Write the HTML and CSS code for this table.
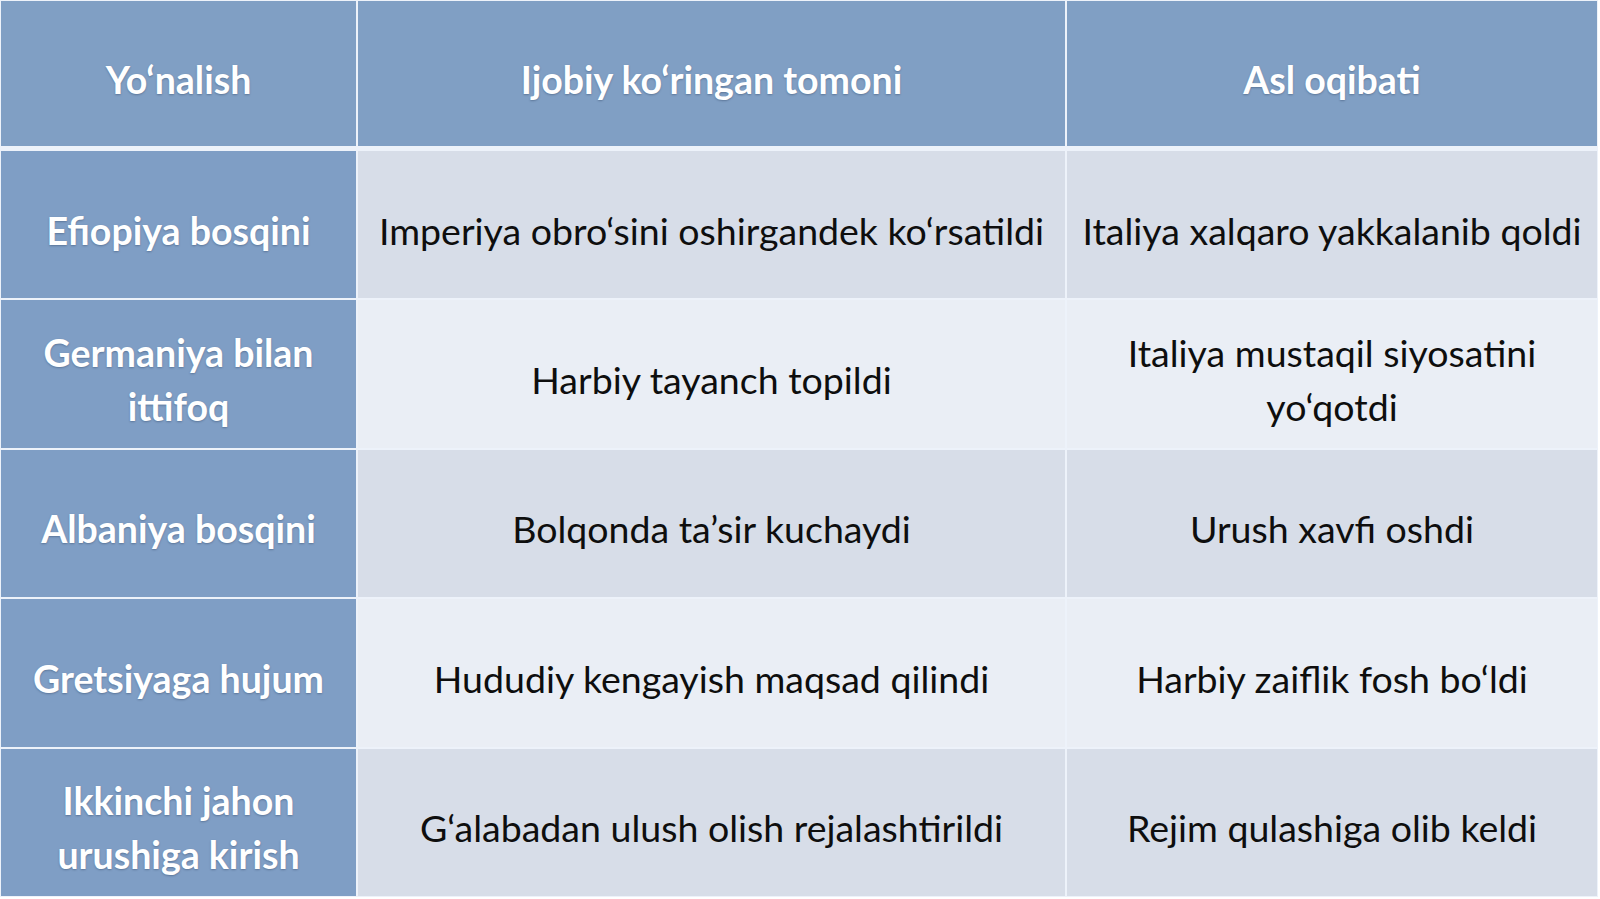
FILE: index.html
```html
<!DOCTYPE html>
<html lang="uz">
<head>
<meta charset="utf-8">
<title>Italiya tashqi siyosati</title>
<link rel="stylesheet" href="styles.css">
</head>
<body>
<div class="table">
  <div class="cell head">Yo‘nalish</div>
  <div class="cell head">Ijobiy ko‘ringan tomoni</div>
  <div class="cell head">Asl oqibati</div>

  <div class="cell first">Efiopiya bosqini</div>
  <div class="cell odd">Imperiya obro‘sini oshirgandek ko‘rsatildi</div>
  <div class="cell odd">Italiya xalqaro yakkalanib qoldi</div>

  <div class="cell first">Germaniya bilan ittifoq</div>
  <div class="cell even">Harbiy tayanch topildi</div>
  <div class="cell even">Italiya mustaqil siyosatini yo‘qotdi</div>

  <div class="cell first">Albaniya bosqini</div>
  <div class="cell odd">Bolqonda ta’sir kuchaydi</div>
  <div class="cell odd">Urush xavfi oshdi</div>

  <div class="cell first">Gretsiyaga hujum</div>
  <div class="cell even">Hududiy kengayish maqsad qilindi</div>
  <div class="cell even">Harbiy zaiflik fosh bo‘ldi</div>

  <div class="cell first">Ikkinchi jahon urushiga kirish</div>
  <div class="cell odd">G‘alabadan ulush olish rejalashtirildi</div>
  <div class="cell odd">Rejim qulashiga olib keldi</div>
</div>
</body>
</html>
```

FILE: styles.css
```css
html, body {
  margin: 0;
  padding: 0;
  background: #ffffff;
}

body {
  width: 1600px;
  height: 899px;
  overflow: hidden;
  font-family: Lato, "Open Sans", sans-serif;
}

.table {
  width: 1598px;
  height: 897px;
  box-sizing: border-box;
  padding: 1px;
  background: #edf2fa;
  display: grid;
  grid-template-columns: 355px 707px 530px;
  grid-template-rows: 148px repeat(5, 1fr);
  gap: 2px;
}

.cell {
  display: flex;
  align-items: center;
  justify-content: center;
  text-align: center;
  box-sizing: border-box;
  padding: 12px 12px 0;
  font-size: 37.5px;
  line-height: 54px;
  color: #0e0e0e;
}

.head {
  margin-bottom: 3px;
  background: #809fc4;
  color: #ffffff;
  font-weight: 700;
  text-shadow: 0 1px 2px rgba(40, 60, 90, 0.4);
}

.first {
  background: #7f9ec5;
  color: #ffffff;
  font-weight: 700;
  text-shadow: 0 1px 2px rgba(40, 60, 90, 0.4);
  padding-left: 20px;
  padding-right: 20px;
}

.odd {
  background: #d7dde8;
}

.even {
  background: #eaeef5;
}
```
